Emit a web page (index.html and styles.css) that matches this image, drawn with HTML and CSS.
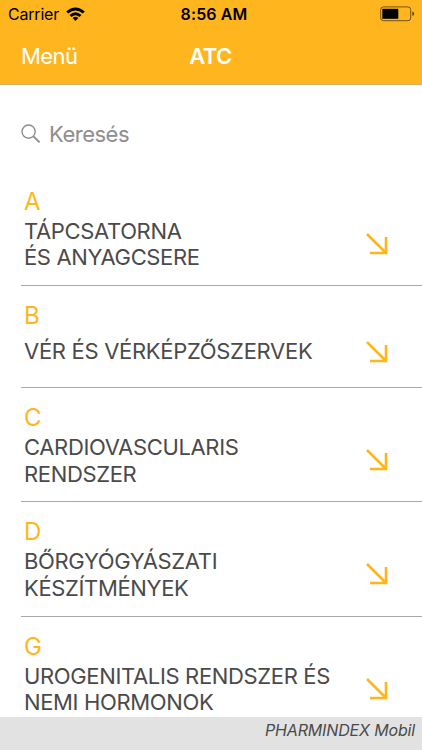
FILE: index.html
```
<!DOCTYPE html>
<html lang="hu">
<head>
  <meta charset="UTF-8">
  <meta name="viewport" content="width=device-width, initial-scale=1">
  <title>ATC</title>
  <link rel="stylesheet" href="styles.css">
</head>
<body>
  <div class="app">
    <header class="header">
      <!-- status bar -->
      <div class="status">
        <div class="status-left">
          <span class="carrier">Carrier</span>
          <svg class="wifi" width="19" height="14" viewBox="0 0 19 14">
            <path d="M0.2 4.5 Q9.5 -3.7 18.8 4.5 L16.8 6.6 Q9.5 0.5 2.2 6.6 Z"/>
            <path d="M3.5 7.9 Q9.5 2.5 15.5 7.9 L13.5 9.9 Q9.5 6.4 5.5 9.9 Z"/>
            <path d="M6.6 11 Q9.5 8.3 12.4 11 L9.5 13.9 Z"/>
          </svg>
        </div>
        <span class="time">8:56 AM</span>
        <svg class="battery" width="35" height="16" viewBox="0 0 35 16">
          <rect x="0.7" y="0.9" width="30" height="13.8" rx="2.8" fill="none" stroke="#000" stroke-opacity="0.55"/>
          <rect x="2.3" y="2.8" width="16" height="10"/>
          <path d="M32.3 5.6 Q34.2 6 34.2 7.8 Q34.2 9.6 32.3 10 Z" fill-opacity="0.6"/>
        </svg>
      </div>
      <nav class="navbar">
        <a class="menu">Menü</a>
        <h1 class="title">ATC</h1>
      </nav>
    </header>

    <!-- search -->
    <div class="search">
      <svg width="20" height="20" viewBox="0 0 20 20" fill="none" stroke="#8e8e90">
        <circle cx="7.6" cy="7.6" r="6.6" stroke-width="1.4"/>
        <path d="M12.4 12.4 L18.6 18.4" stroke-width="2"/>
      </svg>
      <span>Keresés</span>
    </div>

    <ul class="list">
      <li class="row">
        <div class="text">
          <div class="code">A</div>
          <div class="name"><span>TÁPCSATORNA<br>ÉS ANYAGCSERE</span></div>
        </div>
        <svg class="arrow" viewBox="0 0 22 22"><path d="M1 1 L19.5 19.5 M20 4 V20 H4"/></svg>
      </li>
      <li class="row">
        <div class="text">
          <div class="code">B</div>
          <div class="name name-single"><span>VÉR ÉS VÉRKÉPZŐSZERVEK</span></div>
        </div>
        <svg class="arrow" viewBox="0 0 22 22"><path d="M1 1 L19.5 19.5 M20 4 V20 H4"/></svg>
      </li>
      <li class="row">
        <div class="text">
          <div class="code">C</div>
          <div class="name"><span>CARDIOVASCULARIS<br>RENDSZER</span></div>
        </div>
        <svg class="arrow" viewBox="0 0 22 22"><path d="M1 1 L19.5 19.5 M20 4 V20 H4"/></svg>
      </li>
      <li class="row">
        <div class="text">
          <div class="code">D</div>
          <div class="name"><span>BŐRGYÓGYÁSZATI<br>KÉSZÍTMÉNYEK</span></div>
        </div>
        <svg class="arrow" viewBox="0 0 22 22"><path d="M1 1 L19.5 19.5 M20 4 V20 H4"/></svg>
      </li>
      <li class="row">
        <div class="text">
          <div class="code">G</div>
          <div class="name"><span>UROGENITALIS RENDSZER ÉS<br>NEMI HORMONOK</span></div>
        </div>
        <svg class="arrow" viewBox="0 0 22 22"><path d="M1 1 L19.5 19.5 M20 4 V20 H4"/></svg>
      </li>
    </ul>

    <footer class="footer">PHARMINDEX Mobil</footer>
  </div>
</body>
</html>
```
FILE: styles.css
```
* {
  box-sizing: border-box;
}
body {
  margin: 0;
  font-family: Inter, "Liberation Sans", sans-serif;
  background: #fff;
  color: #4a4a4a;
}
.app {
  display: flex;
  flex-direction: column;
  height: 750px;
  overflow: hidden;
}

/* header */
.header {
  flex: none;
  height: 85px;
  background: #ffb61e;
  border-bottom: 1px solid #d3b16b;
}
.status {
  display: grid;
  grid-template-columns: 1fr auto 1fr;
  align-items: center;
  height: 28px;
  padding: 0 7px 0 8px;
  color: #000;
}
.status-left {
  display: flex;
  align-items: center;
  gap: 7px;
}
.carrier {
  font-size: 16px;
  letter-spacing: -0.2px;
}
.time {
  font-size: 16px;
  font-weight: 600;
  letter-spacing: 0.1px;
  padding-left: 5px;
}
.battery {
  justify-self: end;
}
.navbar {
  display: grid;
  grid-template-columns: 1fr auto 1fr;
  align-items: center;
  height: 56px;
  padding: 0 22px 0 21px;
  color: #fff;
}
.menu {
  font-size: 22px;
  letter-spacing: -0.6px;
}
.title {
  margin: 0;
  font-size: 22px;
  font-weight: 600;
  letter-spacing: -0.6px;
}

/* search */
.search {
  flex: none;
  display: flex;
  align-items: center;
  gap: 8px;
  height: 87px;
  padding: 10px 21px 0;
  font-size: 22px;
  letter-spacing: -0.5px;
  color: #8e8e90;
}

/* list */
.list {
  flex: 1;
  min-height: 0;
  overflow: hidden;
  margin: 0 0 0 21px;
  padding: 0;
  list-style: none;
}
.row {
  display: flex;
  justify-content: space-between;
  align-items: center;
  padding: 16px 34px 14.4px 3px;
  border-bottom: 1px solid #a9a9a9;
}
.code {
  font-size: 24px;
  line-height: 28px;
  margin-bottom: 2px;
  color: #ffb61e;
}
.name {
  display: flex;
  align-items: center;
  font-size: 22px;
  line-height: 26.4px;
  letter-spacing: -0.35px;
  white-space: nowrap;
}
.name-single {
  min-height: 40.6px;
  padding-bottom: 2px;
  letter-spacing: -0.3px;
}
.arrow {
  flex: none;
  width: 22px;
  height: 22px;
  margin-top: 29px;
  fill: none;
  stroke: #ffb61e;
  stroke-width: 2.6;
}

/* footer */
.footer {
  flex: none;
  height: 33px;
  padding-right: 7px;
  background: #e2e2e2;
  font-size: 16px;
  line-height: 27px;
  letter-spacing: -0.15px;
  font-style: italic;
  text-align: right;
}
```
